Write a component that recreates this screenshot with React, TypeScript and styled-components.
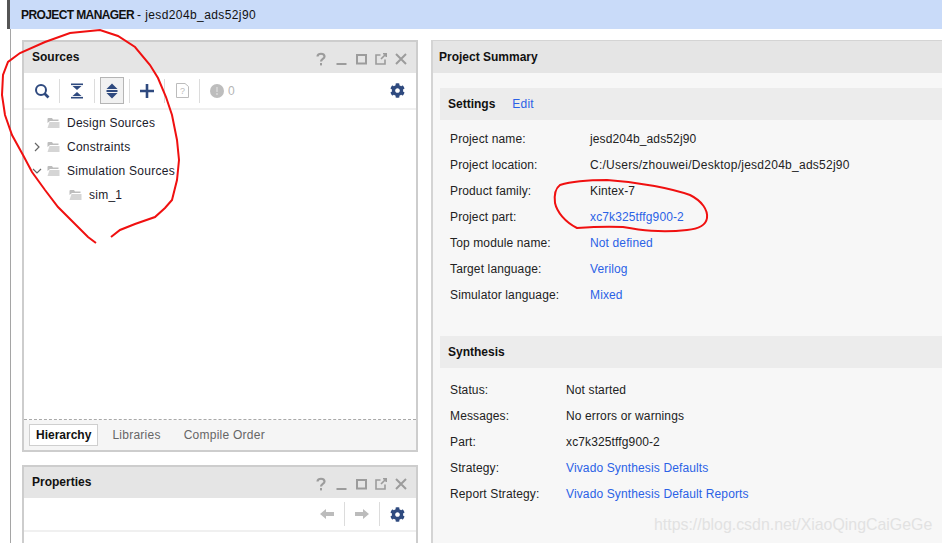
import React from 'react'
import styled, { createGlobalStyle } from 'styled-components'
import { FaCog } from 'react-icons/fa'

const GlobalStyle = createGlobalStyle`
  html, body {
    margin: 0;
    padding: 0;
    background: #ffffff;
  }
  body {
    font-family: "Liberation Sans", Arial, sans-serif;
    font-size: 12px;
    color: #1c1c1c;
  }
`

const Page = styled.div`
  position: relative;
  width: 942px;
  height: 543px;
  overflow: hidden;
  background: #fff;
`

const Banner = styled.header`
  height: 29px;
  margin-left: 7px;
  padding-left: 11px;
  display: flex;
  align-items: center;
  background: #c9dbf9;
  border-left: 3px solid #555;
  box-sizing: border-box;
  letter-spacing: 0.4px;
  color: #111;
  b {
    font-weight: 700;
    letter-spacing: -0.6px;
    margin-right: 3px;
  }
`

const Workspace = styled.div`
  height: 514px;
  margin-left: 10px;
  padding: 11px 0 0 11px;
  box-sizing: border-box;
  display: flex;
  gap: 13px;
  border-left: 1px solid #a5a5a5;
`

const LeftColumn = styled.div`
  width: 396px;
  flex: none;
  display: flex;
  flex-direction: column;
  gap: 13px;
`

const Panel = styled.section<{ $grow?: boolean }>`
  border: 2px solid #cdcdcd;
  border-bottom: ${(p) => (p.$grow ? '2px solid #cdcdcd' : 'none')};
  display: flex;
  flex-direction: column;
  background: #f0f0f0;
  ${(p) => (p.$grow ? 'height: 412px; flex: none;' : 'flex: 1;')}
  box-sizing: border-box;
`

const PanelHeader = styled.div`
  height: 31px;
  flex: none;
  display: flex;
  align-items: center;
  justify-content: space-between;
  background: #e5e5e5;
  padding: 0 5px 0 8px;
  box-sizing: border-box;
`

const PanelTitle = styled.span`
  font-weight: 700;
  color: #111;
  position: relative;
  top: -1px;
`

const WindowButtons = styled.div`
  display: grid;
  grid-auto-flow: column;
  grid-auto-columns: 20px;
  justify-items: center;
  align-items: center;
  padding-top: 2px;
  svg {
    display: block;
  }
`

const Toolbar = styled.div<{ $end?: boolean; $height: number }>`
  height: ${(p) => p.$height}px;
  flex: none;
  display: flex;
  align-items: center;
  justify-content: ${(p) => (p.$end ? 'flex-end' : 'flex-start')};
  background: #fff;
  padding: 0 11px 0 6px;
  box-sizing: border-box;
`

const ToolButton = styled.div<{ $active?: boolean }>`
  width: 24px;
  height: 27px;
  box-sizing: border-box;
  display: flex;
  align-items: center;
  justify-content: center;
  flex: none;
  ${(p) => (p.$active ? 'border: 1px solid #b5b5b5; background: #f1f1f1;' : '')}
`

const ToolDivider = styled.span<{ $space?: number }>`
  width: 1px;
  height: 24px;
  flex: none;
  margin: 0 ${(p) => p.$space ?? 5}px;
  background: #dcdcdc;
`

const IssueCount = styled.span`
  color: #b5b5b5;
  margin-left: -1px;
`

const Spacer = styled.div`
  flex: 1;
`

const TreeArea = styled.div`
  flex: 1;
  background: #fff;
  margin-top: 2px;
  padding-top: 1px;
  border-bottom: 1px dashed #a9a9a9;
`

const TreeRow = styled.div<{ $depth?: number }>`
  height: 24px;
  display: flex;
  align-items: center;
  padding-left: ${(p) => 7 + (p.$depth ?? 0) * 22}px;
  letter-spacing: 0.25px;
  color: #1a1a2a;
`

const Caret = styled.span`
  width: 12px;
  height: 12px;
  flex: none;
  margin-right: 4px;
  display: flex;
  align-items: center;
  justify-content: center;
`

const FolderWrap = styled.span`
  width: 13px;
  flex: none;
  margin-right: 7px;
  display: flex;
`

const TabBar = styled.div`
  height: 29px;
  flex: none;
  display: flex;
  align-items: center;
  padding: 0 5px 1px 5px;
  gap: 1px;
  background: #f5f5f5;
`

const Tab = styled.div<{ $active?: boolean }>`
  height: 22px;
  padding: 0 6px;
  margin-right: ${(p) => (p.$active ? '6px' : '8px')};
  display: flex;
  align-items: center;
  box-sizing: border-box;
  letter-spacing: ${(p) => (p.$active ? '0' : '0.25px')};
  background: ${(p) => (p.$active ? '#fff' : 'transparent')};
  border: 1px solid ${(p) => (p.$active ? '#cfcfcf' : 'transparent')};
  font-weight: ${(p) => (p.$active ? 700 : 400)};
  color: ${(p) => (p.$active ? '#111' : '#666')};
`

const PropertiesBody = styled.div`
  flex: 1;
  background: #fff;
  margin-top: 2px;
`

const SummaryPanel = styled.section`
  flex: 1;
  display: flex;
  flex-direction: column;
  border-left: 2px solid #d4d4d4;
  border-top: 1px solid #d4d4d4;
  background: #f7f7f7;
`

const SummaryHeader = styled.div`
  height: 32px;
  flex: none;
  display: flex;
  align-items: center;
  padding-left: 6px;
  background: #e5e5e5;
  font-weight: 700;
  color: #111;
`

const SummaryBody = styled.div`
  flex: 1;
  padding: 15px 0 0 7px;
  display: flex;
  flex-direction: column;
`

const SectionBar = styled.div`
  height: 32px;
  flex: none;
  display: flex;
  align-items: center;
  gap: 18px;
  padding-left: 8px;
  background: #ececec;
  b {
    color: #111;
  }
`

const Rows = styled.div<{ $top: number; $bottom: number }>`
  padding: ${(p) => p.$top}px 0 0 10px;
  margin-bottom: ${(p) => p.$bottom}px;
`

const Row = styled.div<{ $labelWidth: number }>`
  height: 26px;
  display: grid;
  grid-template-columns: ${(p) => p.$labelWidth}px 1fr;
  align-items: center;
  letter-spacing: 0.13px;
  color: #222;
`

const Value = styled.span<{ $link?: boolean; $wide?: boolean }>`
  color: ${(p) => (p.$link ? '#2b62e6' : '#222')};
  ${(p) => (p.$wide ? 'letter-spacing: 0.26px;' : '')}
`

const EditLink = styled.span`
  color: #2b62e6;
  letter-spacing: 0.2px;
  margin-left: -1px;
`

const Scribble = styled.svg`
  position: absolute;
  inset: 0;
  pointer-events: none;
`

const Watermark = styled.div`
  position: absolute;
  left: 654px;
  top: 516px;
  font-size: 15.9px;
  color: #e2e2e2;
  white-space: nowrap;
`

const NAVY = '#2f4a7f'

const SearchIcon = () => (
  <svg width="16" height="16" viewBox="0 0 16 16" fill="none" stroke={NAVY}>
    <circle cx="7" cy="7" r="5" strokeWidth="2" />
    <path d="M10.5 10.5 L14.5 14.5" strokeWidth="2.6" />
  </svg>
)

const CollapseIcon = () => (
  <svg width="14" height="16" viewBox="0 0 14 16" fill={NAVY}>
    <rect x="1" y="0.5" width="12" height="1.6" />
    <rect x="1" y="13.9" width="12" height="1.6" />
    <path d="M2.5 3 H11.5 L7 7 Z M2.5 13 H11.5 L7 9 Z" />
  </svg>
)

const ExpandIcon = () => (
  <svg width="14" height="18" viewBox="0 0 14 18" fill={NAVY}>
    <path d="M7 1.5 L12.5 7 H1.5 Z M7 16.5 L12.5 11 H1.5 Z" />
    <rect x="1.5" y="8" width="11" height="2" />
  </svg>
)

const PlusIcon = () => (
  <svg width="16" height="16" viewBox="0 0 16 16" fill={NAVY}>
    <path d="M6.7 1 H9.3 V6.7 H15 V9.3 H9.3 V15 H6.7 V9.3 H1 V6.7 H6.7 Z" />
  </svg>
)

const HelpFileIcon = () => (
  <svg width="13" height="15" viewBox="0 0 13 15" fill="none">
    <path d="M0.5 0.5 H9 L12.5 3.5 V14.5 H0.5 Z" stroke="#bcbcbc" />
    <text x="6.5" y="11" fontSize="9" textAnchor="middle" fill="#bcbcbc" fontFamily="Liberation Sans">?</text>
  </svg>
)

const AlertDot = () => (
  <svg width="14" height="14" viewBox="0 0 14 14">
    <circle cx="7" cy="7" r="7" fill="#bdbdbd" />
    <rect x="6" y="3" width="2" height="5" fill="#d2d2d2" />
    <rect x="6" y="9" width="2" height="2" fill="#d2d2d2" />
  </svg>
)

const WindowControls = () => (
  <WindowButtons>
    <svg width="12" height="14" viewBox="0 0 12 14" fill="none" stroke="#9c9c9c" strokeWidth="2.2">
      <path d="M2.5 4.5 C2.5 0.8 9.5 0.8 9.5 4.5 C9.5 7 6 6.8 6 9.5" />
      <rect x="5" y="11" width="2" height="2.4" fill="#9c9c9c" stroke="none" />
    </svg>
    <svg width="11" height="14" viewBox="0 0 11 14" fill="#9c9c9c">
      <rect x="0.5" y="11" width="10" height="2" />
    </svg>
    <svg width="11" height="14" viewBox="0 0 11 14" fill="none" stroke="#9c9c9c" strokeWidth="2">
      <rect x="1" y="3" width="9" height="8.5" />
    </svg>
    <svg width="12" height="14" viewBox="0 0 12 14" fill="none" stroke="#9c9c9c" strokeWidth="1.6">
      <path d="M5.5 3 H1 V12 H10 V7.5 M6 7 L11 2 M8 1.8 H11.2 V5" />
    </svg>
    <svg width="12" height="14" viewBox="0 0 12 14" fill="none" stroke="#9c9c9c" strokeWidth="2">
      <path d="M1 2 L11 12 M11 2 L1 12" />
    </svg>
  </WindowButtons>
)

const FolderIcon = () => (
  <svg width="13" height="12" viewBox="0 0 13 12">
    <path d="M0.5 2 Q0.5 1 1.5 1 H5 L6 2.5 H11.5 V4 H3 L0.5 6 Z" fill="#bdbdbd" />
    <path d="M0.5 11 L2.5 5 H12.5 V11 Z" fill="#d5d5d5" />
  </svg>
)

const CaretIcon = ({ open }: { open?: boolean }) => (
  <svg width="10" height="10" viewBox="0 0 10 10" fill="none" stroke="#666" strokeWidth="1.2">
    <path d={open ? 'M1 3 L5 7 L9 3' : 'M3 1 L7 5 L3 9'} />
  </svg>
)

const ArrowIcon = ({ flip }: { flip?: boolean }) => (
  <svg width="14" height="12" viewBox="0 0 14 12" fill="#bcbcbc" style={flip ? { transform: 'scaleX(-1)' } : undefined}>
    <path d="M0 6 L6 1 V4 H14 V8 H6 V11 Z" />
  </svg>
)

type TreeItem = { label: string; depth?: number; caret?: 'open' | 'closed' }

const treeItems: TreeItem[] = [
  { label: 'Design Sources' },
  { label: 'Constraints', caret: 'closed' },
  { label: 'Simulation Sources', caret: 'open' },
  { label: 'sim_1', depth: 1 },
]

type Info = { label: string; value: string; link?: boolean; wide?: boolean }

const settings: Info[] = [
  { label: 'Project name:', value: 'jesd204b_ads52j90' },
  { label: 'Project location:', value: 'C:/Users/zhouwei/Desktop/jesd204b_ads52j90', wide: true },
  { label: 'Product family:', value: 'Kintex-7' },
  { label: 'Project part:', value: 'xc7k325tffg900-2', link: true },
  { label: 'Top module name:', value: 'Not defined', link: true },
  { label: 'Target language:', value: 'Verilog', link: true },
  { label: 'Simulator language:', value: 'Mixed', link: true },
]

const synthesis: Info[] = [
  { label: 'Status:', value: 'Not started' },
  { label: 'Messages:', value: 'No errors or warnings' },
  { label: 'Part:', value: 'xc7k325tffg900-2' },
  { label: 'Strategy:', value: 'Vivado Synthesis Defaults', link: true },
  { label: 'Report Strategy:', value: 'Vivado Synthesis Default Reports', link: true },
]

const InfoRows = ({ items, labelWidth, top, bottom }: { items: Info[]; labelWidth: number; top: number; bottom: number }) => (
  <Rows $top={top} $bottom={bottom}>
    {items.map((item) => (
      <Row key={item.label} $labelWidth={labelWidth}>
        <span>{item.label}</span>
        <Value $link={item.link} $wide={item.wide}>
          {item.value}
        </Value>
      </Row>
    ))}
  </Rows>
)

const App: React.FC = () => {
  return (
    <Page>
      <GlobalStyle />
      <Banner>
        <b>PROJECT MANAGER</b> - jesd204b_ads52j90
      </Banner>
      <Workspace>
        <LeftColumn>
          <Panel $grow>
            <PanelHeader>
              <PanelTitle>Sources</PanelTitle>
              <WindowControls />
            </PanelHeader>
            <Toolbar $height={35}>
              <ToolButton>
                <SearchIcon />
              </ToolButton>
              <ToolDivider />
              <ToolButton>
                <CollapseIcon />
              </ToolButton>
              <ToolDivider />
              <ToolButton $active>
                <ExpandIcon />
              </ToolButton>
              <ToolDivider />
              <ToolButton>
                <PlusIcon />
              </ToolButton>
              <ToolDivider />
              <ToolButton>
                <HelpFileIcon />
              </ToolButton>
              <ToolDivider />
              <ToolButton>
                <AlertDot />
              </ToolButton>
              <IssueCount>0</IssueCount>
              <Spacer />
              <FaCog size={15} color={NAVY} />
            </Toolbar>
            <TreeArea>
              {treeItems.map((item) => (
                <TreeRow key={item.label} $depth={item.depth}>
                  <Caret>{item.caret && <CaretIcon open={item.caret === 'open'} />}</Caret>
                  <FolderWrap>
                    <FolderIcon />
                  </FolderWrap>
                  {item.label}
                </TreeRow>
              ))}
            </TreeArea>
            <TabBar>
              <Tab $active>Hierarchy</Tab>
              <Tab>Libraries</Tab>
              <Tab>Compile Order</Tab>
            </TabBar>
          </Panel>
          <Panel>
            <PanelHeader>
              <PanelTitle>Properties</PanelTitle>
              <WindowControls />
            </PanelHeader>
            <Toolbar $end $height={32}>
              <ArrowIcon />
              <ToolDivider $space={10} />
              <ArrowIcon flip />
              <ToolDivider $space={10} />
              <FaCog size={15} color={NAVY} />
            </Toolbar>
            <PropertiesBody />
          </Panel>
        </LeftColumn>
        <SummaryPanel>
          <SummaryHeader>Project Summary</SummaryHeader>
          <SummaryBody>
            <SectionBar>
              <b>Settings</b>
              <EditLink>Edit</EditLink>
            </SectionBar>
            <InfoRows items={settings} labelWidth={140} top={6} bottom={28} />
            <SectionBar>
              <b>Synthesis</b>
            </SectionBar>
            <InfoRows items={synthesis} labelWidth={116} top={9} bottom={0} />
          </SummaryBody>
        </SummaryPanel>
      </Workspace>
      <Watermark>https://blog.csdn.net/XiaoQingCaiGeGe</Watermark>
      <Scribble width="942" height="543" viewBox="0 0 942 543" fill="none" stroke="#f01010" strokeWidth="2">
        <path d="M96 243 L88 237 L75 224 L58 207 L45 190 L32 172 L23 155 L12 135 L5 115 L2 95 L3 75 L8 62 L20 53 L45 42 L70 33 L100 30 L118 36 L135 47 L150 65 L158 78 L166 97 L172 115 L177 140 L179 160 L177 180 L172 200 L165 208 L155 217 L135 224 L120 230 L111 237" />
        <path d="M560 185 C573 181 590 180 607 180 C640 182 673 189 690 195 C702 201 708 210 707 218 C706 225 698 229 687 230 C660 233 640 230 623 227 C605 226 590 227 577 228 C565 222 557 212 555 203 C554 195 556 188 560 185 Z" />
      </Scribble>
    </Page>
  )
}

export default App
